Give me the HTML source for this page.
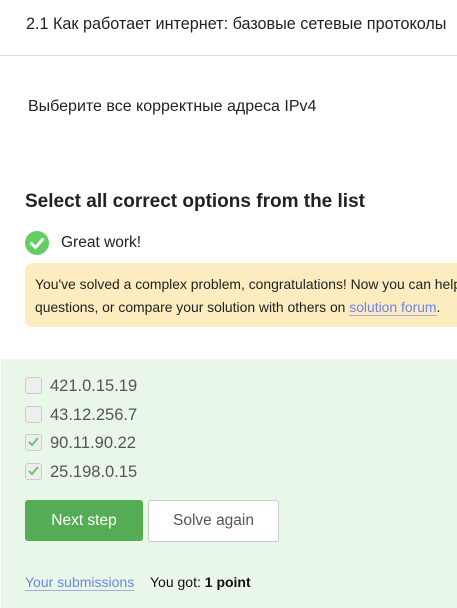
<!DOCTYPE html>
<html><head><meta charset="utf-8"><style>
body{margin:0;width:457px;height:608px;overflow:hidden;font-family:"Liberation Sans",Arial,sans-serif;background:#fff;color:#222;position:relative}
.a{position:absolute;white-space:nowrap}
.cb{position:absolute;left:25px;width:15px;height:15px;border:1px solid #ccc;border-radius:3px;background:#eee}
.lbl{position:absolute;left:50px;font-size:16.5px;color:#555}
</style></head><body>
<div class="a" style="left:26px;top:15px;font-size:16.2px;color:#222">2.1 Как работает интернет: базовые сетевые протоколы</div>
<div class="a" style="left:0;top:55px;width:457px;height:1px;background:#ddd"></div>
<div class="a" style="left:28px;top:98px;font-size:16px">Выберите все корректные адреса IPv4</div>
<div class="a" style="left:25px;top:191px;font-size:19px;font-weight:bold;color:#222">Select all correct options from the list</div>
<svg class="a" style="left:25px;top:231px" width="24" height="24"><circle cx="12" cy="12" r="12" fill="#66cc66"/><path d="M6.5 12.5l4 4 7-8" stroke="#fff" stroke-width="3" fill="none" stroke-linecap="round" stroke-linejoin="round"/></svg>
<div class="a" style="left:61px;top:234px;font-size:15.5px">Great work!</div>
<div class="a" style="left:25px;top:263px;width:450px;height:64px;background:#fdecc0;border-radius:8px"></div>
<div class="a" style="left:35px;top:273px;font-size:13.9px;line-height:23px">You've solved a complex problem, congratulations! Now you can help<br>questions, or compare your solution with others on <span style="color:#6a86e8;border-bottom:1px solid #aac">solution forum</span>.</div>
<div class="a" style="left:1px;top:359px;width:456px;height:249px;background:#e9f7e9"></div>
<div class="cb" style="top:377px"></div><div class="lbl" style="top:377px">421.0.15.19</div>
<div class="cb" style="top:406px"></div><div class="lbl" style="top:406px">43.12.256.7</div>
<div class="cb" style="top:434px"></div><div class="lbl" style="top:434px">90.11.90.22</div>
<svg class="a" style="left:26px;top:434px" width="16" height="16"><path d="M3 8l3 3 6-7" stroke="#66cc66" stroke-width="2" fill="none"/></svg>
<div class="cb" style="top:463px"></div><div class="lbl" style="top:463px">25.198.0.15</div>
<svg class="a" style="left:26px;top:463px" width="16" height="16"><path d="M3 8l3 3 6-7" stroke="#66cc66" stroke-width="2" fill="none"/></svg>
<div class="a" style="left:25px;top:500px;width:118px;height:41px;background:#54ad54;border-radius:3px;color:#fff;font-size:15.5px;text-align:center;line-height:41px">Next step</div>
<div class="a" style="left:148px;top:500px;width:129px;height:40px;background:#fff;border:1px solid #ccc;border-radius:3px;color:#555;font-size:15.5px;text-align:center;line-height:40px">Solve again</div>
<div class="a" style="left:25px;top:574px;font-size:14px;color:#6a86e8;border-bottom:1px solid #aad">Your submissions</div>
<div class="a" style="left:150px;top:574px;font-size:14px;color:#111">You got: <b>1 point</b></div>
</body></html>
